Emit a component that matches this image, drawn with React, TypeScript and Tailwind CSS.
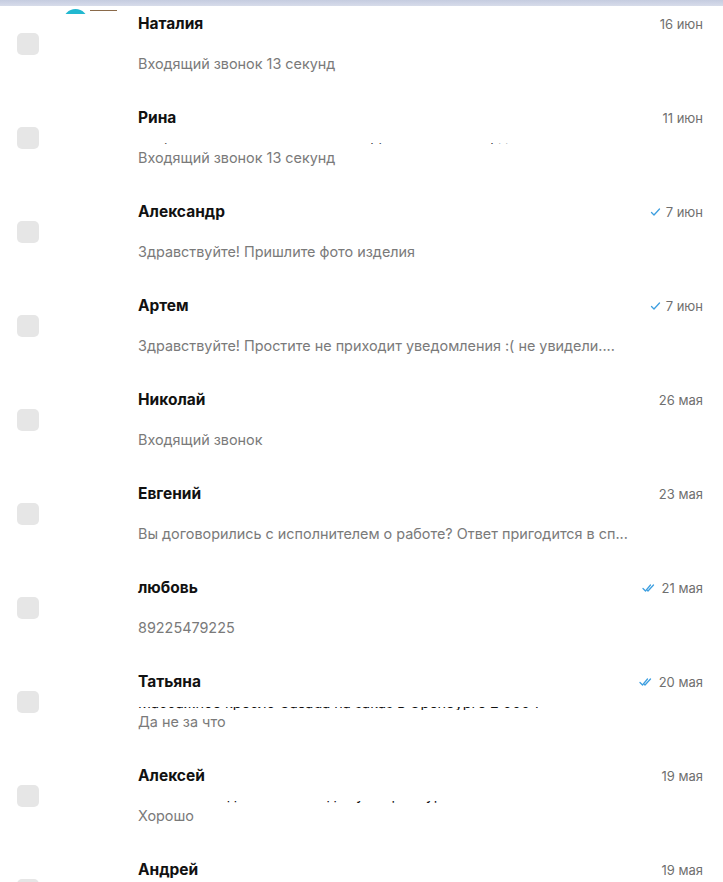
import React from "react";

type Chat = {
  name: string;
  date: string;
  text: string;
  status?: "sent" | "read";
  hidden?: string;
  shift?: string;
};

const chats: Chat[] = [
  { name: "Наталия", date: "16 июн", text: "Входящий звонок 13 секунд" },
  {
    name: "Рина",
    date: "11 июн",
    text: "Входящий звонок 13 секунд",
    hidden: "Стиральная машина на запчасти, ремонт техники, дёшево",
    shift: "-mt-[16px]",
  },
  { name: "Александр", date: "7 июн", text: "Здравствуйте! Пришлите фото изделия", status: "sent" },
  { name: "Артем", date: "7 июн", text: "Здравствуйте! Простите не приходит уведомления :( не увидели....", status: "sent" },
  { name: "Николай", date: "26 мая", text: "Входящий звонок" },
  { name: "Евгений", date: "23 мая", text: "Вы договорились с исполнителем о работе? Ответ пригодится в сп..." },
  { name: "любовь", date: "21 мая", text: "89225479225", status: "read" },
  {
    name: "Татьяна",
    date: "20 мая",
    text: "Да не за что",
    status: "read",
    hidden: "Массажное кресло Casada на заказ в Оренбурге 2 000 ₽",
    shift: "-mt-[13px]",
  },
  {
    name: "Алексей",
    date: "19 мая",
    text: "Хорошо",
    hidden: "Ремонт холодильников на дому в Оренбурге от 2 000 ₽",
    shift: "-mt-[15px]",
  },
  { name: "Андрей", date: "19 мая", text: "Хорошо" },
];

function Tick({ double }: { double?: boolean }) {
  if (double) {
    return (
      <svg width="15" height="10" viewBox="0 0 15 10" fill="none" stroke="#3d9fe0" strokeWidth="1.3" strokeLinecap="round" strokeLinejoin="round">
        <path d="M1 5.5 L3.5 8 L8.5 2" />
        <path d="M5.5 7.5 L6 8 L11.5 2" />
      </svg>
    );
  }
  return (
    <svg width="11" height="10" viewBox="0 0 11 10" fill="none" stroke="#3d9fe0" strokeWidth="1.3" strokeLinecap="round" strokeLinejoin="round">
      <path d="M1.5 5.5 L4 8 L9.5 2" />
    </svg>
  );
}

function Row({ chat }: { chat: Chat }) {
  return (
    <div className="flex h-[94px] shrink-0 pr-5">
      <div className="w-[138px] shrink-0 pl-[17px] pt-[27px]">
        <div className="h-[22px] w-[22px] rounded-[5px] bg-[#e6e6e6]" />
      </div>
      <div className="flex min-w-0 flex-1 flex-col pt-[8px]">
        <div className="flex h-5 items-center justify-between">
          <span className="text-[15.5px] font-bold leading-5 text-[#111]">{chat.name}</span>
          <span className="flex items-center gap-[5px] text-[13px] leading-5 text-[#6f6f6f]">
            {chat.status === "sent" && <Tick />}
            {chat.status === "read" && <Tick double />}
            {chat.date}
          </span>
        </div>
        <div className="h-[15px]" />
        <div className="h-[3px] overflow-hidden">
          {chat.hidden && (
            <div className={`${chat.shift} whitespace-nowrap text-[14.4px] leading-[18px] text-[#111]`}>{chat.hidden}</div>
          )}
        </div>
        <div className="h-[2px]" />
        <div className="max-w-[496px] overflow-hidden whitespace-nowrap text-[14.4px] leading-5 text-[#7a7a7a]">{chat.text}</div>
      </div>
    </div>
  );
}

export default function App() {
  return (
    <div className="flex h-[882px] w-[723px] flex-col overflow-hidden bg-white" style={{ fontFamily: "Inter, 'Noto Sans', sans-serif" }}>
      <div className="h-[6px] shrink-0 bg-gradient-to-b from-[#c5cce0] to-[#d7dcea]" />
      <div className="relative flex flex-col">
        <div className="absolute left-[63px] top-[3px] h-[5px] w-[25px] overflow-hidden">
          <div className="h-[25px] w-[25px] rounded-full bg-[#22b8d0]" />
        </div>
        <div className="absolute left-[90px] top-[4px] h-[1px] w-[27px] bg-[#8a6a4a]" />
        {chats.map((c) => (
          <Row key={c.name} chat={c} />
        ))}
      </div>
    </div>
  );
}
